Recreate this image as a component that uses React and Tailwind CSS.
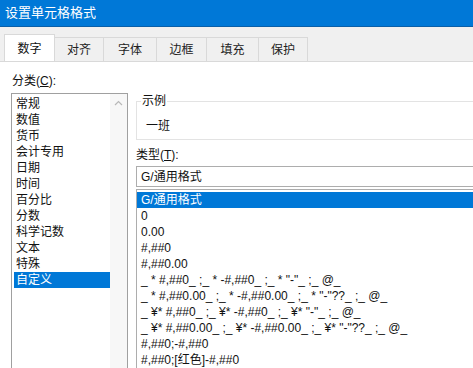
import React from "react";

const tabs = ["数字", "对齐", "字体", "边框", "填充", "保护"];
const tabWidths = ["w-[51px]", "w-[49px]", "w-[53px]", "w-[50px]", "w-[52px]", "w-[49px]"];

const categories = ["常规", "数值", "货币", "会计专用", "日期", "时间", "百分比", "分数", "科学记数", "文本", "特殊", "自定义"];

const formats = [
  "G/通用格式",
  "0",
  "0.00",
  "#,##0",
  "#,##0.00",
  '_ * #,##0_ ;_ * -#,##0_ ;_ * "-"_ ;_ @_',
  '_ * #,##0.00_ ;_ * -#,##0.00_ ;_ * "-"??_ ;_ @_',
  '_ ¥* #,##0_ ;_ ¥* -#,##0_ ;_ ¥* "-"_ ;_ @_',
  '_ ¥* #,##0.00_ ;_ ¥* -#,##0.00_ ;_ ¥* "-"??_ ;_ @_',
  "#,##0;-#,##0",
  "#,##0;[红色]-#,##0",
];

export default function App() {
  return (
    <div className="w-[473px] h-[368px] overflow-hidden bg-white text-[12px] text-[#111] font-['Liberation_Sans','Noto_Sans_CJK_SC',sans-serif]">
      {/* title bar */}
      <div className="h-[27px] bg-[#0078d7] border-b border-[#0a5fa8] flex items-center pl-[5px] text-white text-[13px]">
        设置单元格格式
      </div>

      {/* tabs */}
      <div className="h-[34px] bg-[#f0f0f0] flex items-end pl-[4px]">
        {tabs.map((t, i) =>
          i === 0 ? (
            <div
              key={t}
              className={`${tabWidths[i]} h-[27px] bg-white border border-b-0 border-[#d9d9d9] flex items-center justify-center pt-[2px]`}
            >
              {t}
            </div>
          ) : (
            <div
              key={t}
              className={`${tabWidths[i]} h-[24px] bg-[#f0f0f0] border border-l-0 border-b-0 border-[#d9d9d9] flex items-center justify-center text-[#222]`}
            >
              {t}
            </div>
          )
        )}
      </div>

      {/* body */}
      <div className="flex border-t border-[#d9d9d9]">
        {/* category column */}
        <div className="w-[135px] shrink-0 pl-[11px] pt-[11px]">
          <div className="h-[16px] leading-[16px] pl-[1px]">
            分类(<span className="underline">C</span>):
          </div>
          <div className="mt-[4px] w-[117px] h-[290px] border border-[#a0a0a0] flex">
            <div className="flex-1 pt-[2px] pl-[2px]">
              {categories.map((c) =>
                c === "自定义" ? (
                  <div key={c} className="h-[16px] leading-[16px] bg-[#0078d7] text-white pl-[2px] w-[96px]">
                    {c}
                  </div>
                ) : (
                  <div key={c} className="h-[16px] leading-[16px] pl-[2px]">
                    {c}
                  </div>
                )
              )}
            </div>
            <div className="w-[17px] bg-[#f7f7f7] flex justify-center pt-[6px]">
              <svg width="9" height="6" viewBox="0 0 9 6">
                <path d="M1 5 L4.5 1.5 L8 5" fill="none" stroke="#b8b8b8" strokeWidth="1.2" />
              </svg>
            </div>
          </div>
        </div>

        {/* right column */}
        <div className="flex-1 min-w-0 pt-[39px] pl-[1px]">
          <div className="relative h-[39px] border border-[#e3e3e3] border-r-0">
            <span className="absolute -top-[9px] left-[4px] bg-white px-[1px] leading-[16px]">示例</span>
            <div className="pl-[9px] pt-[16px] leading-[16px]">一班</div>
          </div>
          <div className="mt-[7px] h-[16px] leading-[16px]">
            类型(<span className="underline">T</span>):
          </div>
          <div className="mt-[3px] h-[21px] border border-[#adadad] border-r-0 pl-[4px] flex items-center">
            G/通用格式
          </div>
          <div className="mt-[2px] border border-[#adadad] border-r-0 pt-[2px] h-[200px]">
            {formats.map((f, i) =>
              i === 0 ? (
                <div key={i} className="h-[16px] leading-[16px] bg-[#0078d7] text-white pl-[4px] whitespace-pre">
                  {f}
                </div>
              ) : (
                <div key={i} className="h-[16px] leading-[16px] pl-[4px] whitespace-pre">
                  {f}
                </div>
              )
            )}
          </div>
        </div>
      </div>
    </div>
  );
}
